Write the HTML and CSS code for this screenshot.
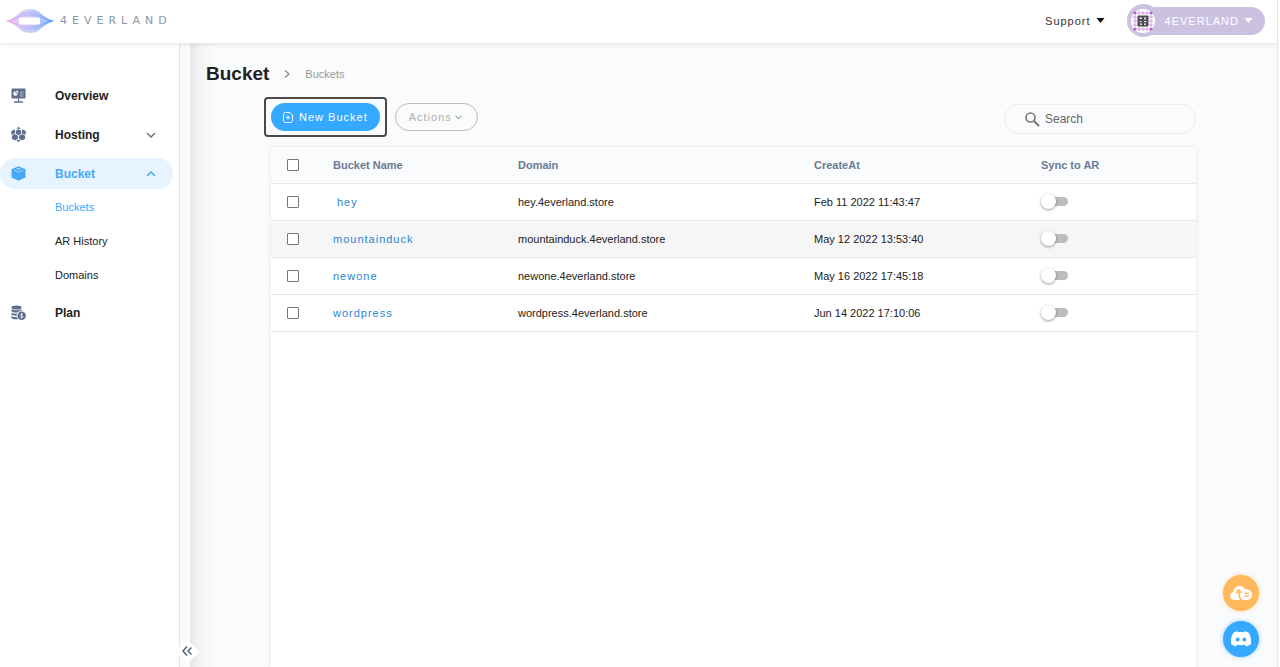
FILE: index.html
```html
<!DOCTYPE html>
<html lang="en">
<head>
  <meta charset="UTF-8" />
  <meta name="viewport" content="width=device-width, initial-scale=1.0" />
  <title>Buckets - 4EVERLAND</title>
  <link rel="stylesheet" href="styles.css">
</head>
<body>
  <header class="topbar">
    <a class="logo" href="#">
      <svg width="50" height="24" viewBox="0 0 50 24" fill="none">
        <defs>
          <linearGradient id="logo-grad" x1="0" y1="0" x2="50" y2="0" gradientUnits="userSpaceOnUse">
            <stop offset="0" stop-color="#f3a6ee" />
            <stop offset="0.5" stop-color="#a9a9f5" />
            <stop offset="1" stop-color="#3d9bff" />
          </linearGradient>
        </defs>
        <path d="M0 12C8 10 12 6 17 2C21 -0.5 29 -0.5 33 2C38 6 42 10 50 12C42 14 38 18 33 22C29 24.500 21 24.500 17 22C12 18 8 14 0 12Z" fill="url(#logo-grad)" fill-opacity="0.6" />
        <g stroke="url(#logo-grad)" stroke-width="0.7">
          <path d="M2 12C12 10 14 4 25 4S38 10 48 12C38 14 36 20 25 20S12 14 2 12Z" />
          <path d="M4 12C13 10 15 6 25 6S37 10 46 12C37 14 35 18 25 18S13 14 4 12Z" />
        </g>
        <rect x="14" y="8.500" width="21" height="7" rx="1" fill="#fff" />
      </svg>
      <span class="wordmark">4EVERLAND</span>
    </a>
    <div class="topbar-right">
      <button class="support">Support
        <svg width="9" height="5" viewBox="0 0 9 5"><path d="M0.500 0H8.500L4.500 5Z" fill="#111" /></svg>
      </button>
      <button class="account">
        <span class="avatar">
          <svg width="24" height="24" viewBox="0 0 24 24">
            <circle cx="12" cy="12" r="12" fill="#fff" />
            <g fill="#dcb4e6">
              <circle cx="8" cy="4" r="1.800" /><circle cx="12" cy="4" r="1.800" /><circle cx="16" cy="4" r="1.800" />
              <circle cx="8" cy="20" r="1.800" /><circle cx="12" cy="20" r="1.800" /><circle cx="16" cy="20" r="1.800" />
              <circle cx="4" cy="8" r="1.800" /><circle cx="4" cy="12" r="1.800" /><circle cx="4" cy="16" r="1.800" />
              <circle cx="20" cy="8" r="1.800" /><circle cx="20" cy="12" r="1.800" /><circle cx="20" cy="16" r="1.800" />
            </g>
            <g fill="#b45fcb">
              <circle cx="4" cy="4" r="1.600" /><circle cx="20" cy="4" r="1.600" />
              <circle cx="4" cy="20" r="1.600" /><circle cx="20" cy="20" r="1.600" />
            </g>
            <rect x="6.500" y="6.500" width="11" height="11" rx="1" fill="#4a4a4e" />
            <g fill="#e3dfe6">
              <rect x="8.500" y="8.500" width="2.500" height="1.500" /><rect x="13" y="8.500" width="2" height="2" />
              <rect x="8.500" y="12" width="2" height="1.200" /><rect x="13" y="12" width="2.500" height="1.200" />
              <rect x="9" y="14.500" width="2" height="1.500" /><rect x="13" y="14.500" width="2" height="1.500" />
            </g>
          </svg>
        </span>
        4EVERLAND
        <svg width="9" height="5" viewBox="0 0 9 5"><path d="M0.500 0H8.500L4.500 5Z" fill="#fff" /></svg>
      </button>
    </div>
  </header>

  <div class="layout">
    <aside class="sidebar">
      <nav>
        <a class="nav-item" href="#">
          <svg class="nav-icon" viewBox="0 0 15 15">
            <path d="M1.500 0.500H13.500C14.200 0.500 14.500 0.900 14.500 1.500V9.500C14.500 10.200 14.200 10.500 13.500 10.500H1.500C0.800 10.500 0.500 10.200 0.500 9.500V1.500C0.500 0.900 0.800 0.500 1.500 0.500Z" fill="#5f6f8a" />
            <path d="M7.500 10.500V14M3 14H12" stroke="#5f6f8a" stroke-width="1.300" />
            <path d="M4.500 3.300A2.200 2.200 0 1 0 6.700 5.500H4.500Z" fill="#fff" />
            <path d="M5.300 2.500A2.200 2.200 0 0 1 7.400 4.700H5.300Z" fill="#fff" />
            <path d="M9 4H12.500M9 6H12.500M9 8H12.500" stroke="#c9d0da" stroke-width="0.800" />
          </svg>
          <span>Overview</span>
        </a>
        <a class="nav-item" href="#">
          <svg class="nav-icon" viewBox="0 0 15 15" fill="#5f6f8a">
            <path d="M7.500 2.200L10.200 3.700V6.700L7.500 8.200L4.800 6.700V3.700Z" />
            <path d="M3.800 7L6.900 8.700V11.800L3.800 13.500L0.900 11.800V8.700Z" />
            <path d="M11.200 7L14.100 8.700V11.800L11.200 13.500L8.100 11.800V8.700Z" />
            <path d="M5.300 1.300L7.500 0L9.700 1.300L7.500 2Z" />
            <path d="M0.300 7.500V4L3.500 2.200L4 4V6.200L1.800 7.500Z" />
            <path d="M14.700 7.500V4L11.500 2.200L11 4V6.200L13.200 7.500Z" />
            <path d="M5.500 13.500L7.500 12.400L9.500 13.500L7.500 15Z" />
          </svg>
          <span>Hosting</span>
          <svg class="chevron" viewBox="0 0 10 6"><path d="M1 1L5 5L9 1" /></svg>
        </a>
        <a class="nav-item active" href="#">
          <svg class="nav-icon" viewBox="0 0 15 15">
            <path d="M7.500 0.300L14.500 3.300V11.500L7.500 14.800L0.500 11.500V3.300Z" fill="#47a9f5" />
            <path d="M3 4.200L7.500 6L12 4.200" stroke="#a5d6fc" stroke-width="1" fill="none" />
            <path d="M5 2.800L7.500 1.800L10 2.800L7.500 3.800Z" fill="#a5d6fc" />
          </svg>
          <span>Bucket</span>
          <svg class="chevron" viewBox="0 0 10 6"><path d="M1 5L5 1L9 5" /></svg>
        </a>
        <div class="subnav">
          <a class="current" href="#">Buckets</a>
          <a href="#">AR History</a>
          <a href="#">Domains</a>
        </div>
        <a class="nav-item" href="#">
          <svg class="nav-icon" viewBox="0 0 15 15">
            <g fill="#5f6f8a">
              <ellipse cx="5.500" cy="2.500" rx="5" ry="2" />
              <path d="M0.500 4C2 5.800 9 5.800 10.500 4V5.800C8.500 6 7.500 6.600 6.800 7.500C4 7.700 1.300 7.200 0.500 6.200Z" />
              <path d="M0.500 7.500C1.500 8.500 4 8.800 6 8.600C5.600 9.500 5.500 10.200 5.600 10.900C3.500 10.900 1.200 10.500 0.500 9.700Z" />
              <path d="M0.500 11C1.500 12 4 12.200 5.900 12.100C6.200 13 6.700 13.600 7.300 14.200C4.500 14.600 1.200 14.200 0.500 13Z" />
              <circle cx="10.700" cy="10.700" r="4.200" />
            </g>
            <path d="M12 9.200C11 8.400 9.500 8.900 9.500 9.800C9.500 11 12 10.400 12 11.700C12 12.700 10.300 12.900 9.300 12.100M10.700 8V13.400" fill="none" stroke="#fff" stroke-width="0.700" />
          </svg>
          <span>Plan</span>
        </a>
      </nav>
      <button class="collapse" aria-label="Collapse menu">
        <svg width="10" height="10" viewBox="0 0 10 10" fill="none" stroke="#4f5f7c" stroke-width="1.400"><path d="M5 0.500L1 5L5 9.500M9.500 1.500L6 5L9.500 8.500" /></svg>
      </button>
    </aside>

    <main class="content">
      <div class="heading">
        <h1>Bucket</h1>
        <svg width="6" height="8" viewBox="0 0 6 8" fill="none" stroke="#888" stroke-width="1.200"><path d="M1 0.500L5 4L1 7.500" /></svg>
        <span>Buckets</span>
      </div>

      <div class="panel">
        <div class="toolbar">
          <div class="highlight">
            <button class="pill primary">
              <svg width="10" height="11" viewBox="0 0 10 11" fill="none" stroke="#fff"><path d="M2.500 0.500H6.500L9.500 3V8.500C9.500 9.800 8.800 10.500 7.500 10.500H2.500C1.200 10.500 0.500 9.800 0.500 8.500V2.500C0.500 1.200 1.200 0.500 2.500 0.500ZM3 5.500H7M5 3.500V7.500" /></svg>
              New Bucket
            </button>
          </div>
          <button class="pill outlined">Actions
            <svg width="7" height="5" viewBox="0 0 7 5" fill="none" stroke="#aaa" stroke-width="1.200"><path d="M0.500 0.700L3.500 3.800L6.500 0.700" /></svg>
          </button>
          <label class="search">
            <svg width="15" height="15" viewBox="0 0 15 15" fill="none" stroke="#777"><circle cx="5.500" cy="5.500" r="4.500" stroke-width="1.600" /><path d="M9 9L14 14" stroke-width="2" /></svg>
            <input type="text" placeholder="Search" aria-label="Search" />
          </label>
        </div>

        <div class="card">
          <table>
            <colgroup>
              <col class="col-check" /><col class="col-name" /><col class="col-domain" /><col /><col class="col-sync" />
            </colgroup>
            <thead>
              <tr>
                <th><input class="check" type="checkbox" aria-label="Select all" /></th>
                <th>Bucket Name</th>
                <th>Domain</th>
                <th>CreateAt</th>
                <th>Sync to AR</th>
              </tr>
            </thead>
            <tbody>
              <tr>
                <td><input class="check" type="checkbox" aria-label="Select hey" /></td>
                <td><a class="short" href="#">hey</a></td>
                <td>hey.4everland.store</td>
                <td>Feb 11 2022 11:43:47</td>
                <td><input class="switch" type="checkbox" aria-label="Sync hey" /></td>
              </tr>
              <tr class="hovered">
                <td><input class="check" type="checkbox" aria-label="Select mountainduck" /></td>
                <td><a href="#">mountainduck</a></td>
                <td>mountainduck.4everland.store</td>
                <td>May 12 2022 13:53:40</td>
                <td><input class="switch" type="checkbox" aria-label="Sync mountainduck" /></td>
              </tr>
              <tr>
                <td><input class="check" type="checkbox" aria-label="Select newone" /></td>
                <td><a href="#">newone</a></td>
                <td>newone.4everland.store</td>
                <td>May 16 2022 17:45:18</td>
                <td><input class="switch" type="checkbox" aria-label="Sync newone" /></td>
              </tr>
              <tr>
                <td><input class="check" type="checkbox" aria-label="Select wordpress" /></td>
                <td><a href="#">wordpress</a></td>
                <td>wordpress.4everland.store</td>
                <td>Jun 14 2022 17:10:06</td>
                <td><input class="switch" type="checkbox" aria-label="Sync wordpress" /></td>
              </tr>
            </tbody>
          </table>
        </div>
      </div>
    </main>
  </div>

  <div class="floating">
    <button class="fab upload" aria-label="Uploads">
      <svg width="24" height="16" viewBox="0 0 24 16">
        <path d="M5.500 15C2.500 15 1 13.200 1 11C1 8.800 2.500 7.300 4.500 7C4.800 3.500 7 1 10.500 1C13.200 1 15.300 2.300 16 4.200C20 3.700 23.300 6.300 23.300 9.600C23.300 12.800 20.800 15 18 15Z" fill="#fff" />
        <path d="M7 8L9.800 5L12.600 8M9.800 5.500C9.800 10 10.200 13 12.500 15.500" fill="none" stroke="#ffb95c" stroke-width="1.700" />
        <path d="M15.500 8.300H20M15.500 11H20" stroke="#ffb95c" stroke-width="1.400" />
      </svg>
    </button>
    <button class="fab discord" aria-label="Discord">
      <svg width="22" height="16" viewBox="0 0 22 16">
        <path d="M8 1.200L7.500 0.300C5.800 0.600 4.500 1.100 3.300 1.700C1.300 4.800 0.600 8.500 1 13C2.600 14.300 4.300 15.100 6 15.600L7.200 13.800C9.700 14.400 12.300 14.400 14.800 13.800L16 15.600C17.700 15.100 19.400 14.300 21 13C21.400 8.500 20.700 4.800 18.700 1.700C17.500 1.100 16.200 0.600 14.500 0.300L14 1.200C12 0.900 10 0.900 8 1.200Z" fill="#fff" />
        <ellipse cx="7.700" cy="8.500" rx="1.900" ry="2.100" fill="#34a9ff" />
        <ellipse cx="14.300" cy="8.500" rx="1.900" ry="2.100" fill="#34a9ff" />
      </svg>
    </button>
  </div>
</body>
</html>
```
FILE: styles.css
```css
* {
  box-sizing: border-box;
}
body {
  display: flex;
  flex-direction: column;
  min-height: 100vh;
  margin: 0 2px 0 0;
  border-right: 1px solid #e4e7e9;
  background: #fff;
  color: #222;
  font-family: "Liberation Sans", Arial, sans-serif;
  font-size: 11px;
}
button {
  display: flex;
  align-items: center;
  padding: 0;
  border: none;
  background: none;
  font: inherit;
  letter-spacing: 1px;
  cursor: pointer;
}
a {
  color: inherit;
  text-decoration: none;
}

/* top bar */
.topbar {
  position: relative;
  z-index: 2;
  display: flex;
  align-items: center;
  justify-content: space-between;
  height: 43px;
  padding: 0 12px 2px 5px;
  background: #fff;
  box-shadow: 0 1px 5px rgba(60, 70, 80, 0.15);
}
.logo {
  display: flex;
  align-items: center;
  gap: 5px;
}
.wordmark {
  font-family: "DejaVu Sans", sans-serif;
  font-size: 11px;
  letter-spacing: 5px;
  color: #8a97a8;
}
.topbar-right {
  display: flex;
  align-items: center;
  gap: 22px;
}
.support {
  gap: 5px;
  color: #333;
}
.account {
  gap: 5px;
  height: 28px;
  padding-right: 12px;
  border-radius: 14px;
  background: #cbc2e1;
  color: #fff;
}
.avatar {
  display: flex;
  align-items: center;
  justify-content: center;
  width: 33px;
  height: 33px;
  border-radius: 50%;
  background: #cbc2e1;
}

/* sidebar */
.layout {
  flex: 1;
  display: flex;
}
.sidebar {
  position: relative;
  width: 190px;
  padding: 37px 17px 0 0;
  background: linear-gradient(to right, #fff 179px, #e6e6e6 179px, #e6e6e6 180px, #fafafa 180px);
}
.nav-item {
  display: flex;
  align-items: center;
  height: 31px;
  padding: 0 17px 0 11px;
  border-radius: 16px;
  font-size: 12px;
  font-weight: bold;
}
.nav-item + .nav-item {
  margin-top: 8px;
}
.nav-icon {
  width: 15px;
  height: 15px;
  margin-right: 29px;
}
.nav-item span {
  flex: 1;
}
.chevron {
  width: 10px;
  height: 6px;
  fill: none;
  stroke: #777;
  stroke-width: 1.5;
}
.active {
  background: #e7f4ff;
  color: #47a9f5;
}
.active .chevron {
  stroke: #47a9f5;
}
.subnav {
  margin: 1px 0 5px 55px;
  line-height: 34px;
}
.subnav a {
  display: block;
}
.subnav .current {
  color: #34a9ff;
}
.collapse {
  position: absolute;
  bottom: 6px;
  right: -10px;
  z-index: 1;
  justify-content: center;
  width: 26px;
  height: 20px;
}
.collapse::before {
  content: "";
  position: absolute;
  width: 17px;
  height: 17px;
  background: #fff;
  transform: rotate(45deg);
}
.collapse svg {
  position: relative;
}

/* content */
.content {
  flex: 1;
  display: flex;
  flex-direction: column;
  background: linear-gradient(to right, #e5e7ea, #f3f4f6 10px, #fafbfd 28px);
}
.heading {
  display: flex;
  align-items: center;
  gap: 15px;
  height: 24px;
  margin: 19px 16px 11px;
}
.heading h1 {
  margin: 0;
  font-size: 19px;
}
.heading span {
  color: #999;
}
.panel {
  flex: 1;
  display: flex;
  flex-direction: column;
  padding: 0 81px;
}
.toolbar {
  display: flex;
  align-items: center;
  gap: 8px;
  margin-left: -7px;
}
.highlight {
  padding: 4px 5px;
  border: 2px solid #4a4a4c;
  border-radius: 4px;
}
.pill {
  height: 28px;
  padding: 0 12px;
  border-radius: 14px;
}
.primary {
  gap: 6px;
  background: #34a9ff;
  color: #fff;
}
.outlined {
  gap: 3px;
  padding: 0 15px 0 13px;
  border: 1px solid #bbb;
  color: #b0b0b0;
}
.search {
  display: flex;
  align-items: center;
  gap: 5px;
  width: 192px;
  height: 30px;
  margin: 4px 0 0 auto;
  padding: 0 20px;
  border: 1px solid #e9ebee;
  border-radius: 15px;
}
.search input {
  flex: 1;
  min-width: 0;
  padding: 0;
  border: none;
  outline: none;
  background: none;
  font: inherit;
  font-size: 12px;
}
.search input::placeholder {
  color: #666;
}
.card {
  flex: 1;
  margin-top: 10px;
  background: #fff;
  box-shadow: 0 0 5px rgba(60, 70, 80, 0.12);
}
table {
  width: 100%;
  table-layout: fixed;
  border-collapse: separate;
  border-spacing: 0;
}
.col-check {
  width: 46px;
}
.col-name {
  width: 20%;
}
.col-domain {
  width: 32%;
}
.col-sync {
  width: 171px;
}
th, td {
  height: 37px;
  padding: 0 0 0 16px;
  border-bottom: 1px solid #e6e8eb;
  text-align: left;
}
th {
  background: #fafbfd;
  color: #6b7a94;
}
td a {
  color: #2e83d5;
  letter-spacing: 1px;
}
td .short {
  padding-left: 4px;
}
.hovered {
  background: #f6f6f6;
}
.check {
  display: block;
  appearance: none;
  width: 12px;
  height: 12px;
  margin: 0;
  border: 1px solid #777;
  border-radius: 1px;
  background: #fff;
}
.switch {
  display: block;
  position: relative;
  appearance: none;
  width: 25px;
  height: 9px;
  margin: 0 0 2px 2px;
  border-radius: 5px;
  background: #bdbdbd;
}
.switch::before {
  content: "";
  position: absolute;
  top: -3px;
  left: -2px;
  width: 15px;
  height: 15px;
  border-radius: 50%;
  background: #fff;
  box-shadow: 0 1px 3px rgba(0, 0, 0, 0.4);
}

/* floating buttons */
.floating {
  position: fixed;
  right: 21px;
  bottom: 10px;
  display: flex;
  flex-direction: column;
  gap: 10px;
}
.fab {
  justify-content: center;
  width: 36px;
  height: 36px;
  border-radius: 50%;
}
.upload {
  background: #ffb95c;
  box-shadow: 0 0 4px rgba(255, 185, 92, 0.5);
}
.discord {
  background: #34a9ff;
  box-shadow: 0 0 4px rgba(52, 169, 255, 0.5);
}
```
